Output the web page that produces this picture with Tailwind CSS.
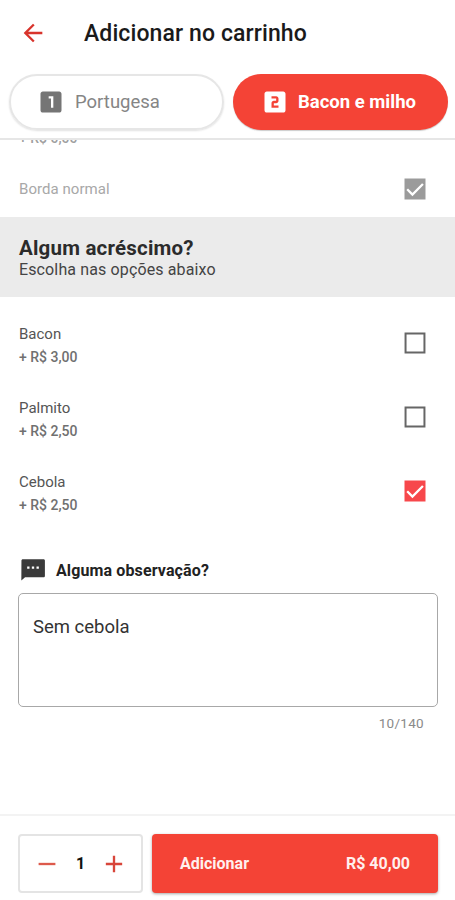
<!DOCTYPE html>
<html lang="pt-BR">

<head>
  <meta charset="UTF-8" />
  <title>Adicionar no carrinho</title>
  <script src="https://cdn.jsdelivr.net/npm/@tailwindcss/browser@4"></script>
</head>

<body class="bg-white font-['Roboto',sans-serif]">
  <div class="w-[455px] h-[900px] flex flex-col overflow-hidden bg-white">
    <!-- Header -->
    <header class="shrink-0 h-[140px] border-b-2 border-[#e6e6e6]">
      <div class="h-[65px] flex items-center pl-[19px]">
        <svg class="size-7 text-[#d8342c]" viewBox="0 0 24 24" fill="currentColor"><path d="M20 11H7.83l5.59-5.59L12 4l-8 8 8 8 1.41-1.41L7.83 13H20v-2z" /></svg>
        <h1 class="ml-[37px] pt-[2px] text-[23px] leading-7 tracking-[0.1px] font-medium text-[#1a1a1a] whitespace-nowrap">Adicionar no carrinho</h1>
      </div>
      <div class="flex gap-[9px] pl-[9px] pt-[9px]">
        <button class="w-[215px] h-[56px] flex items-center rounded-full border-2 border-[#e6e6e6] shadow-[0_1px_2px_rgba(0,0,0,0.12)] pl-[26px]">
          <svg class="size-7 text-[#757575]" viewBox="0 0 24 24" fill="currentColor"><path d="M19 3H5c-1.1 0-2 .9-2 2v14c0 1.1.9 2 2 2h14c1.1 0 2-.9 2-2V5c0-1.1-.9-2-2-2zm-5 14h-2V9h-2V7h4v10z" /></svg>
          <span class="ml-[10px] pt-px text-[18.5px] text-[#858585]">Portugesa</span>
        </button>
        <button class="w-[215px] h-[56px] flex items-center rounded-full bg-[#f44336] shadow-[0_1px_1px_rgba(0,0,0,0.2)] pl-[28px] text-white">
          <svg class="size-7" viewBox="0 0 24 24" fill="currentColor"><path d="M19 3H5c-1.1 0-2 .9-2 2v14c0 1.1.9 2 2 2h14c1.1 0 2-.9 2-2V5c0-1.1-.9-2-2-2zm-4 8c0 1.11-.9 2-2 2h-2v2h4v2H9v-4c0-1.11.9-2 2-2h2V9H9V7h4c1.1 0 2 .89 2 2v2z" /></svg>
          <span class="ml-[9px] pt-px text-[18.5px] font-bold whitespace-nowrap">Bacon e milho</span>
        </button>
      </div>
    </header>

    <!-- Options, scrolled under the header -->
    <main class="flex-1 min-h-0 overflow-hidden">
      <div class="-mt-[12px] h-[33px] pl-[19px] text-[14px] leading-5 font-medium text-[#a0a0a0]">+ R$ 0,00</div>
      <div class="h-[56px] flex items-center justify-between pl-[19px] pr-[26px]">
        <span class="text-[15px] tracking-[0.05px] text-[#a8a8a8]">Borda normal</span>
        <svg class="size-7 text-[#9b9b9b]" viewBox="0 0 24 24"><path d="M3 3h18v18H3z" fill="currentColor" /><path d="M5.3 12.2l4.5 4.5L18.8 7.7" fill="none" stroke="#fff" stroke-width="2" /></svg>
      </div>
      <section class="h-[80px] bg-[#ebebeb] pl-[19px] pt-[19px]">
        <h2 class="text-[20.5px] leading-6 tracking-[0.2px] font-bold text-[#2b2b2b]">Algum acréscimo?</h2>
        <p class="text-[16px] leading-5 tracking-[0.13px] text-[#444]">Escolha nas opções abaixo</p>
      </section>
      <ul class="pt-[9px]">
        <li class="h-[74.2px] flex items-center justify-between pl-[19px] pr-[26px]">
          <div class="pt-[5px]">
            <p class="text-[15px] leading-[23px] text-[#555]">Bacon</p>
            <p class="text-[14px] leading-[23px] font-medium text-[#707070]">+ R$ 3,00</p>
          </div>
          <svg class="size-7 text-[#666]" viewBox="0 0 24 24"><path d="M3.9 3.9h16.2v16.2H3.900z" fill="none" stroke="currentColor" stroke-width="1.7" /></svg>
        </li>
        <li class="h-[74.2px] flex items-center justify-between pl-[19px] pr-[26px]">
          <div class="pt-[6px]">
            <p class="text-[15px] leading-[23px] text-[#555]">Palmito</p>
            <p class="text-[14px] leading-[23px] font-medium text-[#707070]">+ R$ 2,50</p>
          </div>
          <svg class="size-7 text-[#666]" viewBox="0 0 24 24"><path d="M3.9 3.9h16.2v16.2H3.900z" fill="none" stroke="currentColor" stroke-width="1.7" /></svg>
        </li>
        <li class="h-[74.2px] flex items-center justify-between pl-[19px] pr-[26px]">
          <div class="pt-[6px]">
            <p class="text-[15px] leading-[23px] text-[#555]">Cebola</p>
            <p class="text-[14px] leading-[23px] font-medium text-[#707070]">+ R$ 2,50</p>
          </div>
          <svg class="size-7 text-[#f7474b]" viewBox="0 0 24 24"><path d="M3 3h18v18H3z" fill="currentColor" /><path d="M5.3 12.2l4.5 4.5L18.8 7.7" fill="none" stroke="#fff" stroke-width="2" /></svg>
        </li>
      </ul>

      <!-- Notes -->
      <div class="mt-[26px] flex items-center pl-[19px] h-[30px]">
        <svg class="size-7 text-[#3a3a3a]" viewBox="0 0 24 24" fill="currentColor"><path d="M21 2.800H3.300c-.7 0-1.200.5-1.200 1.200L2 21l3.200-2.700H21c.7 0 1.200-.5 1.200-1.200V4c0-.7-.5-1.200-1.200-1.200zM9 11H7V9h2v2zm4 0h-2V9h2v2zm4 0h-2V9h2v2z" /></svg>
        <label for="note" class="ml-[9px] pt-[2px] text-[16px] tracking-[0.12px] font-bold text-[#222]">Alguma observação?</label>
      </div>
      <div class="mt-[8px] pl-[18px] pr-[17px]">
        <textarea id="note" maxlength="140" class="block w-full h-[114px] resize-none rounded-[5px] border border-[#a8a8a8] px-[14px] pt-[21px] text-[18.5px] leading-6 text-[#333]">Sem cebola</textarea>
        <p class="mt-[6px] pr-[14px] text-right text-[13.5px] leading-5 tracking-[0.3px] text-[#8a8a8a]">10/140</p>
      </div>
    </main>

    <!-- Bottom bar -->
    <footer class="shrink-0 h-[86px] flex items-start gap-[9px] border-t-2 border-[#f3f3f3] pt-[18px] pl-[18px] pr-[17px]">
      <div class="w-[125px] h-[59px] flex items-center rounded-[4px] border-2 border-[#e4e4e4] pl-[13px]">
        <svg class="size-7 text-[#dd5a4c]" viewBox="0 0 24 24" fill="currentColor"><path d="M19.2 13H4.8v-2h14.4v2z" /></svg>
        <span class="w-[39px] text-center text-[16px] font-bold text-[#111]">1</span>
        <svg class="size-7 text-[#d8453a]" viewBox="0 0 24 24" fill="currentColor"><path d="M19 13h-6v6h-2v-6H5v-2h6V5h2v6h6v2z" /></svg>
      </div>
      <button class="flex-1 h-[59px] flex items-center justify-between rounded-[4px] bg-[#f44336] px-[28px] shadow-[0_1px_3px_rgba(0,0,0,0.35)] text-[16px] font-bold text-[#fff0ee]">
        <span>Adicionar</span>
        <span>R$ 40,00</span>
      </button>
    </footer>
  </div>
</body>

</html>
